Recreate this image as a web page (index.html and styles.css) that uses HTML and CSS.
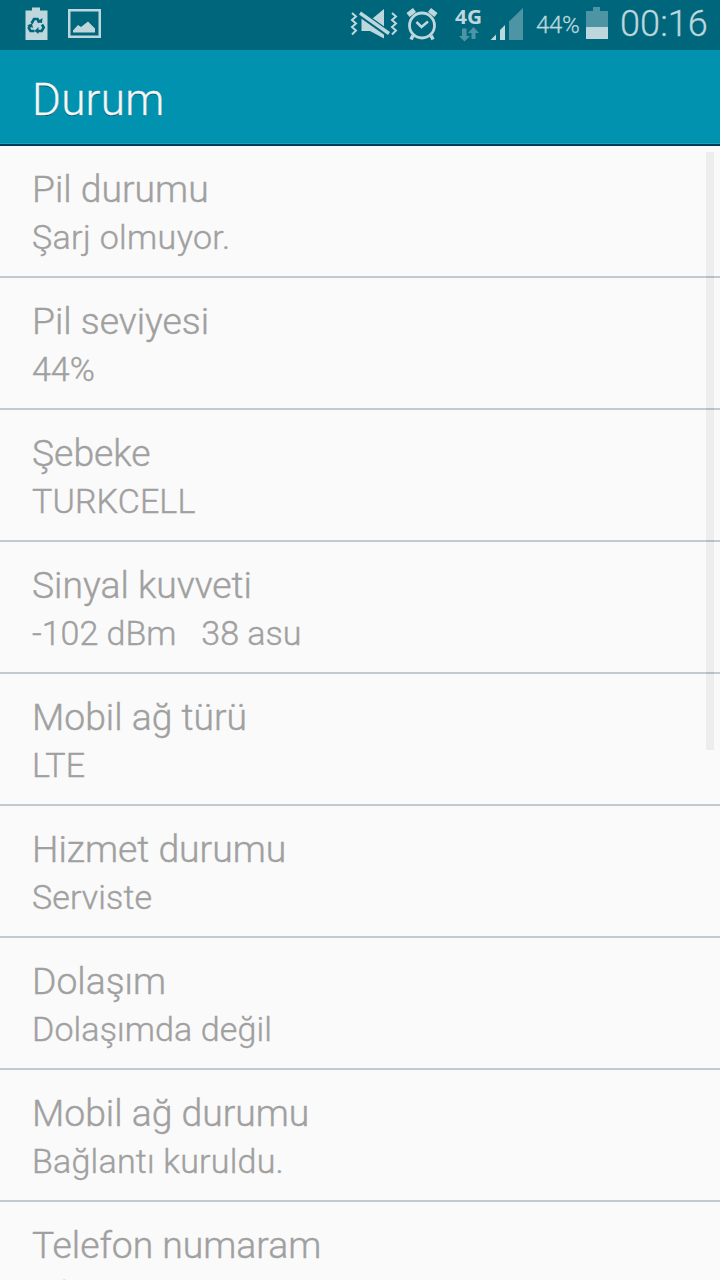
FILE: index.html
```html
<!DOCTYPE html>
<html lang="tr">
<head>
<meta charset="utf-8">
<title>Durum</title>
<link rel="stylesheet" href="styles.css">
</head>
<body>
<div class="screen">
  <header class="status-bar">
    <svg class="notifications" width="120" height="50" viewBox="0 0 120 50" fill="#bdd7dd">
      <path d="M25.500 10.500H32V7.500h8v3h7.500V40h-22z"/>
      <g fill="none" stroke="#00667b" stroke-width="2.600">
        <path d="M31.500 23.500l2.500-4.500h3.500l2 3.500"/>
        <path d="M42 24.500l1.700 3-2 3.500h-4"/>
        <path d="M34.500 31h-4l-1.700-3 1.700-3"/>
      </g>
      <path fill="#00667b" d="M36.500 22l5.500 1 .5-5zM38.500 27l-4 4 4 3zM27 25.500l5-2 1 4.500z"/>
      <path fill-rule="evenodd" d="M68 9h33v29H68zM70.500 11.500v24h28v-24z"/>
      <path d="M73 32.500v-2l5-5.500 3 2 7-5.500 7 7v4z"/>
    </svg>
    <svg class="indicators" width="190" height="50" viewBox="342 0 190 50" fill="#bdd7dd">
      <g fill="none" stroke="#bdd7dd" stroke-width="2">
        <path d="M352 13l4 3.500-4 3.500 4 3.500-4 3.500 4 3.500-4 4"/>
        <path d="M392 13l4 3.500-4 3.500 4 3.500-4 3.500 4 3.500-4 4"/>
      </g>
      <path d="M361.500 18.500h11l11.500-9.500V38.500L370 31h-8.500z"/>
      <path d="M360 13.500l29 20.500" stroke="#00667b" stroke-width="7"/>
      <path d="M360 13l29 20.500" stroke="#bdd7dd" stroke-width="3.400"/>
      <g fill="none" stroke="#bdd7dd">
        <circle cx="422" cy="25.500" r="12.500" stroke-width="2.800"/>
        <path stroke-width="2.500" d="M416.500 22l5 5 6.500-5.500"/>
        <path stroke-width="3.500" d="M413 35.500l-2 4M431 35.500l2 4"/>
        <path stroke-width="5" d="M408 15l6.500-5M436 15l-6.500-5"/>
      </g>
      <text class="network" x="455" y="23.500" textLength="27" lengthAdjust="spacingAndGlyphs">4G</text>
      <g fill="#4d95a4">
        <path d="M462 28.500h4.500V36h3.500l-5.500 5.500-5.500-5.500h3z"/>
        <path d="M471.500 39v-6h-3.500l5.500-6 5.500 6h-3.500v6z"/>
        <path d="M509 40V21.500L523 8v32z"/>
      </g>
      <path d="M490.500 40l5.500-5.500V40zM500 40V30l5-5v15z"/>
    </svg>
    <span class="percent">44%</span>
    <svg class="battery" width="22" height="50" viewBox="0 0 22 50">
      <path fill="#4d95a4" d="M0 11h7V7h7v4h8v16H0z"/>
      <path fill="#bdd7dd" d="M0 27h22v12H0z"/>
    </svg>
    <span class="clock">00:16</span>
  </header>
  <div class="title-bar"><h1>Durum</h1></div>
  <main class="list">
    <div class="scrollbar"></div>
    <section class="row"><h2>Pil durumu</h2><p class="loosest">Şarj olmuyor.</p></section>
    <section class="row"><h2>Pil seviyesi</h2><p>44%</p></section>
    <section class="row"><h2>Şebeke</h2><p class="loose">TURKCELL</p></section>
    <section class="row"><h2>Sinyal kuvveti</h2><p>-102 dBm&nbsp;&nbsp; 38 asu</p></section>
    <section class="row"><h2>Mobil ağ türü</h2><p>LTE</p></section>
    <section class="row"><h2>Hizmet durumu</h2><p class="loose">Serviste</p></section>
    <section class="row"><h2>Dolaşım</h2><p class="loose">Dolaşımda değil</p></section>
    <section class="row"><h2>Mobil ağ durumu</h2><p class="looser">Bağlantı kuruldu.</p></section>
    <section class="row"><h2>Telefon numaram</h2><p>Bilinmeyen</p></section>
  </main>
</div>
</body>
</html>
```
FILE: styles.css
```css
* { box-sizing: border-box; }
body { margin: 0; background: #fafafa; font-family: Roboto, sans-serif; }
.screen { width: 720px; height: 1280px; overflow: hidden; display: flex; flex-direction: column; }
.status-bar { height: 50px; flex: none; display: flex; background: #00667b; color: #bdd7dd; }
.indicators { margin-left: 222px; }
.network { font: 700 20px "Open Sans", sans-serif; }
.percent { width: 50px; margin-left: 4px; font-size: 24px; line-height: 50px; font-weight: 300; letter-spacing: -0.3px; -webkit-text-stroke: 0.3px; }
.clock { margin-left: 12px; font-size: 36px; line-height: 48px; font-weight: 300; letter-spacing: 0.1px; -webkit-text-stroke: 0.3px; }
.title-bar { height: 96px; flex: none; padding: 20px 32px 0; background: #0092af; border-bottom: 2px solid #003b56; box-shadow: inset 0 -1px #21a0b9; }
h1 { margin: 0; font-size: 44px; line-height: 60px; font-weight: 300; letter-spacing: 0.3px; color: #f5f5f5; text-shadow: 0 1px 0 #00515f; -webkit-text-stroke: 0.3px; }
.list { position: relative; flex: none; height: 1134px; overflow: hidden; }
.row { height: 132px; padding: 20px 32px 0; border-bottom: 2px solid #bfcad3; color: #a0a0a0; white-space: nowrap; font-weight: 300; -webkit-text-stroke: 0.4px #a0a0a0; }
.row h2 { margin: 0; font-size: 37.3px; line-height: 46px; font-weight: 300; }
.row p { margin: 1px 0 0; font-size: 34px; line-height: 48px; }
.row .loose { letter-spacing: 0.12px; }
.row .looser { letter-spacing: 0.22px; }
.row .loosest { letter-spacing: 0.36px; }
.scrollbar { position: absolute; left: 706px; top: 6px; width: 8px; height: 598px; background: rgba(0, 0, 0, 0.05); }
```
